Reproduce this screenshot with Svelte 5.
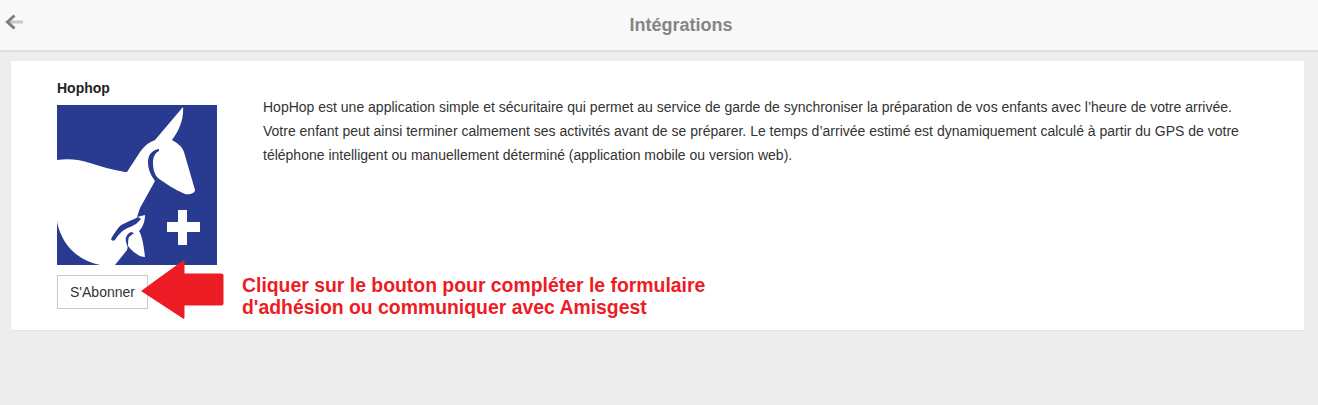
<script>
  const title = 'Intégrations';
</script>

<div class="page">
  <header class="bar">
    <button class="back" aria-label="Retour">
      <svg width="20" height="20" viewBox="0 0 20 20">
        <path d="M19 9H6" stroke="#c8c8c8" stroke-width="3" fill="none" />
        <path d="M10.500 2.500L3.500 9L10.500 15.500" stroke="#7d7d7d" stroke-width="3" fill="none" />
      </svg>
    </button>
    <h1>{title}</h1>
  </header>

  <main class="card">
    <section class="side">
      <h2>Hophop</h2>
      <svg class="logo" width="160" height="160" viewBox="0 0 160 160">
        <rect width="160" height="160" fill="#283b91" />
        <path fill="#fff" d="M0 55C12 53 24 55 33 58C45 62 56 65 68 67L70 67L83 47C87 41 92 37 98 35L126 2C127 14 122 26 115 35C120 38 125 41 127 47L138 85C138 88 133 90 128 89C118 85 108 78 98 71L98 76L83 103L80 112L88 110C88 116 86 122 82 126C85 130 87 142 88 152C82 152 76 147 71 141L70 145L58 160H43C28 157 16 149 8 137C3 128 0 120 0 115Z" />
        <path fill="#283b91" d="M81 112C74 116 66 118 62 122C59 126 56 130 54 134Q55 137 58 135C61 130 64 127 67 125C72 122 76 121 79 119L84 114Z" />
        <path fill="#283b91" d="M102 44C95 45 91 50 91 57C91 65 94 70 98 76L101 73C97 69 96 63 96 57C96 52 98 48 102 46Z" />
        <path fill="#283b91" d="M74 127C70 129 68 132 69 137L71 143C71 138 71 134 72 132L77 128Z" />
        <path fill="#fff" d="M121 105H130V117H143V127H130V140H121V127H110V117H121Z" />
      </svg>
      <button class="subscribe">S'Abonner</button>
    </section>
    <p class="description">
      HopHop est une application simple et sécuritaire qui permet au service de garde de synchroniser la préparation de vos enfants avec l’heure de votre arrivée.<br />
      Votre enfant peut ainsi terminer calmement ses activités avant de se préparer. Le temps d’arrivée estimé est dynamiquement calculé à partir du GPS de votre<br />
      téléphone intelligent ou manuellement déterminé (application mobile ou version web).
    </p>

    <svg class="arrow" width="86" height="62" viewBox="0 0 86 62">
      <path fill="#ed1c24" d="M1 32L43 1.500Q44.500 0.500 44.500 3V14.500H81.500Q83.500 14.500 83.500 16.500V44.500Q83.500 46.500 81.500 46.500H44.500V58Q44.500 60.500 43 59.500Z" />
    </svg>
    <p class="note">Cliquer sur le bouton pour compléter le formulaire<br />d'adhésion ou communiquer avec Amisgest</p>
  </main>
</div>

<style>
  :global(body) {
    margin: 0;
    background: #ededed;
    font-family: "Liberation Sans", Arial, sans-serif;
  }
  .page {
    height: 405px;
    background: #ededed;
    overflow: hidden;
  }
  .bar {
    height: 50px;
    background: #f8f8f8;
    border-bottom: 2px solid #dedede;
    display: flex;
    align-items: center;
    justify-content: center;
    padding-left: 44px;
    position: relative;
  }
  .bar h1 {
    margin: 0;
    font-size: 18px;
    font-weight: 700;
    color: #858585;
    line-height: 50px;
  }
  .back {
    position: absolute;
    left: 4px;
    top: 13px;
    width: 20px;
    height: 20px;
    padding: 0;
    border: 0;
    background: none;
    display: block;
  }
  .back svg { display: block; }
  .card {
    position: relative;
    box-sizing: border-box;
    margin: 9px 14px 0 11px;
    height: 269px;
    background: #fff;
    padding: 20px 46px;
    display: flex;
    gap: 46px;
    box-shadow: 0 1px 1px #e4e4e4;
  }
  .side {
    width: 160px;
    flex: none;
    display: flex;
    flex-direction: column;
    align-items: flex-start;
  }
  h2 {
    margin: 0;
    font-size: 14px;
    line-height: 15px;
    font-weight: 700;
    color: #222;
    height: 24px;
  }
  .logo { display: block; }
  .subscribe {
    margin-top: 10px;
    width: 91px;
    height: 34px;
    background: #fff;
    border: 1px solid #c9c9c9;
    font: 14px "Liberation Sans", Arial, sans-serif;
    color: #333;
    padding: 0;
    text-align: center;
  }
  .description {
    margin: 15.400px 0 0;
    font-size: 14px;
    line-height: 23.800px;
    color: #333;
    white-space: nowrap;
  }
  .arrow {
    position: absolute;
    left: 129px;
    top: 198px;
  }
  .note {
    position: absolute;
    left: 231px;
    top: 213px;
    margin: 0;
    font-size: 19.400px;
    line-height: 22px;
    font-weight: 700;
    color: #ed1c24;
    white-space: nowrap;
  }
</style>
